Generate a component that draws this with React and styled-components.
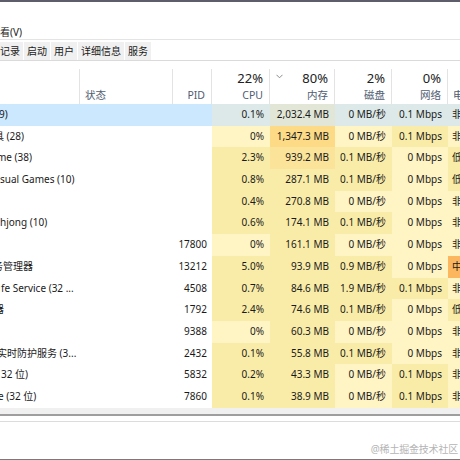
import styled, { createGlobalStyle } from "styled-components";

const GlobalStyle = createGlobalStyle`
  html, body {
    margin: 0;
    padding: 0;
    background: #fff;
  }
  body {
    font-family: "Noto Sans", "Noto Sans CJK SC", sans-serif;
    color: #1a1a1a;
  }
`;

const COLS = "80px 93px 39px 58px 65px 57px 56px 60px";

const HEAT = {
  0: "#fff4c4",
  1: "#f9eca8",
  2: "#fbe39a",
  3: "#fcda86",
  hot: "#fcb65e",
};

const rows = [
  { name: "9)", shift: -1, pid: "", cpu: ["0.1%", 1], mem: ["2,032.4 MB", 3], disk: ["0 MB/秒", 0], net: ["0.1 Mbps", 1], power: ["非", 0], selected: true },
  { name: "具 (28)", shift: -6, pid: "", cpu: ["0%", 0], mem: ["1,347.3 MB", 3], disk: ["0 MB/秒", 0], net: ["0.1 Mbps", 1], power: ["非", 0] },
  { name: "me (38)", shift: -3, pid: "", cpu: ["2.3%", 1], mem: ["939.2 MB", 2], disk: ["0.1 MB/秒", 1], net: ["0 Mbps", 0], power: ["低", 1] },
  { name: "sual Games (10)", shift: 0, pid: "", cpu: ["0.8%", 1], mem: ["287.1 MB", 1], disk: ["0.1 MB/秒", 1], net: ["0 Mbps", 0], power: ["低", 1] },
  { name: "", shift: 0, pid: "", cpu: ["0.4%", 1], mem: ["270.8 MB", 1], disk: ["0 MB/秒", 0], net: ["0 Mbps", 0], power: ["非", 0] },
  { name: "hjong (10)", shift: 0, pid: "", cpu: ["0.6%", 1], mem: ["174.1 MB", 1], disk: ["0.1 MB/秒", 1], net: ["0 Mbps", 0], power: ["非", 0] },
  { name: "", shift: 0, pid: "17800", cpu: ["0%", 0], mem: ["161.1 MB", 1], disk: ["0 MB/秒", 0], net: ["0 Mbps", 0], power: ["非", 0] },
  { name: "务管理器", shift: -7, pid: "13212", cpu: ["5.0%", 1], mem: ["93.9 MB", 1], disk: ["0.9 MB/秒", 1], net: ["0 Mbps", 0], power: ["中", "hot"] },
  { name: "fe Service (32 ...", shift: 1, pid: "4508", cpu: ["0.7%", 1], mem: ["84.6 MB", 1], disk: ["1.9 MB/秒", 1], net: ["0.1 Mbps", 1], power: ["非", 0] },
  { name: "器", shift: -6, pid: "1792", cpu: ["2.4%", 1], mem: ["74.6 MB", 1], disk: ["0.1 MB/秒", 1], net: ["0 Mbps", 0], power: ["低", 1] },
  { name: "", shift: 0, pid: "9388", cpu: ["0%", 0], mem: ["60.3 MB", 1], disk: ["0 MB/秒", 0], net: ["0 Mbps", 0], power: ["非", 0] },
  { name: "实时防护服务 (3...", shift: -3, pid: "2432", cpu: ["0.1%", 1], mem: ["55.8 MB", 1], disk: ["0.1 MB/秒", 1], net: ["0 Mbps", 0], power: ["非", 0] },
  { name: "32 位)", shift: 1, pid: "5832", cpu: ["0.2%", 1], mem: ["43.3 MB", 1], disk: ["0 MB/秒", 0], net: ["0.1 Mbps", 1], power: ["非", 0] },
  { name: "e (32 位)", shift: -2, pid: "7860", cpu: ["0.1%", 1], mem: ["38.9 MB", 1], disk: ["0 MB/秒", 0], net: ["0.1 Mbps", 1], power: ["非", 0] },
];

const heatColor = (level, selected) => {
  if (selected) return level >= 2 ? "#e1e6d6" : "#dce9e8";
  return HEAT[level];
};

const Chevron = () => (
  <svg width="7" height="5" viewBox="0 0 7 5">
    <polyline points="0.5,0.8 3.5,3.8 6.5,0.8" fill="none" stroke="#8a8a8a" strokeWidth="1" />
  </svg>
);

const App = () => (
  <>
    <GlobalStyle />
    <Window>
      <TopGap />
      <MenuBar>
        <MenuItem>看(V)</MenuItem>
      </MenuBar>
      <TabBar>
        <Tab $first>记录</Tab>
        <Tab>启动</Tab>
        <Tab>用户</Tab>
        <Tab>详细信息</Tab>
        <Tab>服务</Tab>
      </TabBar>
      <Header>
        <HeaderCell />
        <HeaderCell $align="left">
          <Pct />
          <Label>状态</Label>
        </HeaderCell>
        <HeaderCell>
          <Pct />
          <Label>PID</Label>
        </HeaderCell>
        <HeaderCell>
          <Pct>22%</Pct>
          <Label>CPU</Label>
        </HeaderCell>
        <HeaderCell>
          <PctRow>
            <Chevron />
            <span>80%</span>
          </PctRow>
          <Label>内存</Label>
        </HeaderCell>
        <HeaderCell>
          <Pct>2%</Pct>
          <Label>磁盘</Label>
        </HeaderCell>
        <HeaderCell>
          <Pct>0%</Pct>
          <Label>网络</Label>
        </HeaderCell>
        <HeaderCell $align="left" $last>
          <Pct />
          <Label>电源使用情况</Label>
        </HeaderCell>
      </Header>
      <Body>
        {rows.map((r, i) => (
          <Row key={i}>
            <NameCell $selected={r.selected}>
              <NameText $shift={r.shift}>{r.name}</NameText>
            </NameCell>
            <PlainCell $selected={r.selected} />
            <PlainCell $selected={r.selected} $right>
              {r.pid}
            </PlainCell>
            <HeatCell $bg={heatColor(r.cpu[1], r.selected)}>{r.cpu[0]}</HeatCell>
            <HeatCell $bg={heatColor(r.mem[1], r.selected)}>{r.mem[0]}</HeatCell>
            <HeatCell $bg={heatColor(r.disk[1], r.selected)}>{r.disk[0]}</HeatCell>
            <HeatCell $bg={heatColor(r.net[1], r.selected)}>{r.net[0]}</HeatCell>
            <HeatCell $bg={heatColor(r.power[1], r.selected)} $left>
              {r.power[0]}
            </HeatCell>
          </Row>
        ))}
      </Body>
      <ScrollStrip />
      <Footer />
      <Watermark>@稀土掘金技术社区</Watermark>
    </Window>
  </>
);

const Window = styled.div`
  position: relative;
  width: 460px;
  height: 460px;
  box-sizing: border-box;
  overflow: hidden;
  display: flex;
  flex-direction: column;
  border-top: 2px solid #5d5d6b;
  border-bottom: 1px solid #7a7a7a;
  background: #fff;
`;

const TopGap = styled.div`
  height: 24px;
  flex: none;
`;

const MenuBar = styled.div`
  height: 13px;
  flex: none;
  display: flex;
  align-items: center;
  border-bottom: 1px solid #e4e4e4;
  overflow: hidden;
`;

const MenuItem = styled.span`
  font-size: 10px;
  line-height: 13px;
  color: #1a1a1a;
`;

const TabBar = styled.div`
  height: 20px;
  flex: none;
  display: flex;
  align-items: flex-end;
  gap: 1px;
  border-bottom: 1px solid #dadada;
  overflow: hidden;
`;

const Tab = styled.div`
  height: 18px;
  line-height: 18px;
  padding: 0 3px;
  margin-left: ${(p) => (p.$first ? "-3px" : "0")};
  background: #f0f0f0;
  font-size: 10px;
  color: #1a1a1a;
  white-space: nowrap;
`;

const Header = styled.div`
  height: 43px;
  flex: none;
  display: grid;
  grid-template-columns: ${COLS};
  align-items: end;
`;

const HeaderCell = styled.div`
  height: 35px;
  box-sizing: border-box;
  display: flex;
  flex-direction: column;
  align-items: ${(p) => (p.$align === "left" ? "flex-start" : "flex-end")};
  padding: ${(p) => (p.$align === "left" ? "0 0 0 5px" : "0 6px 0 0")};
  border-right: ${(p) => (p.$last ? "none" : "1px solid #e3e3e3")};
  white-space: nowrap;
  overflow: hidden;
`;

const Pct = styled.div`
  height: 18px;
  line-height: 18px;
  font-size: 13px;
  color: #222;
`;

const PctRow = styled.div`
  align-self: stretch;
  height: 18px;
  line-height: 18px;
  font-size: 13px;
  color: #222;
  display: flex;
  justify-content: space-between;
  align-items: flex-start;
  padding-left: 6px;

  & > svg {
    margin-top: 5px;
  }
`;

const Label = styled.div`
  height: 17px;
  line-height: 17px;
  font-size: 10.5px;
  color: #4f5d72;
`;

const Body = styled.div`
  flex: none;
  display: flex;
  flex-direction: column;
`;

const Row = styled.div`
  height: 21.7px;
  display: grid;
  grid-template-columns: ${COLS};
  font-size: 10px;
  line-height: 21.7px;
  white-space: nowrap;
`;

const NameCell = styled.div`
  overflow: hidden;
  background: ${(p) => (p.$selected ? "#cce8ff" : "#fff")};
`;

const NameText = styled.span`
  display: inline-block;
  margin-left: ${(p) => p.$shift}px;
  color: #1a1a1a;
`;

const PlainCell = styled.div`
  background: ${(p) => (p.$selected ? "#cce8ff" : "#fff")};
  text-align: ${(p) => (p.$right ? "right" : "left")};
  padding-right: 5px;
  color: #1a1a1a;
`;

const HeatCell = styled.div`
  background: ${(p) => p.$bg};
  text-align: ${(p) => (p.$left ? "left" : "right")};
  padding: ${(p) => (p.$left ? "0 0 0 4px" : "0 6px 0 0")};
  color: #1a1a1a;
  overflow: hidden;
`;

const ScrollStrip = styled.div`
  height: 6px;
  flex: none;
  background: #f0f0f0;
  border-bottom: 2px solid #9e9e9e;
`;

const Footer = styled.div`
  flex: 1;
  margin-top: 5px;
  border-top: 1px solid #dcdcdc;
`;

const Watermark = styled.div`
  position: absolute;
  right: 2px;
  bottom: 3px;
  font-size: 10px;
  color: #b5b5b5;
  letter-spacing: -0.2px;
`;

export default App;
